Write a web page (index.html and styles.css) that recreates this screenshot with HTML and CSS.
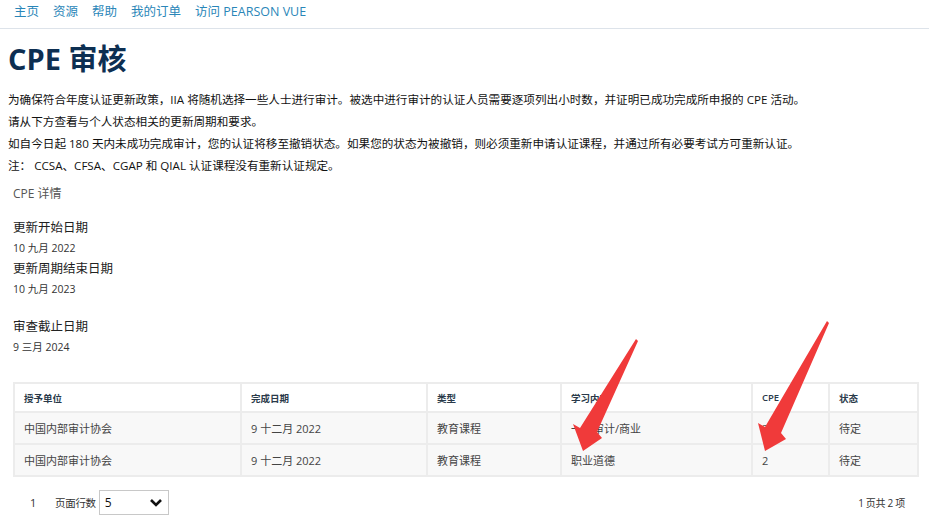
FILE: index.html
```html
<!DOCTYPE html>
<html lang="zh-CN">
<head>
    <meta charset="UTF-8">
    <title>CPE 审核</title>
    <link rel="stylesheet" href="styles.css">
</head>
<body>
<div class="page">

    <nav class="topnav">
        <a href="#">主页</a>
        <a href="#">资源</a>
        <a href="#">帮助</a>
        <a href="#">我的订单</a>
        <a href="#">访问 PEARSON VUE</a>
    </nav>

    <h1 class="title">CPE 审核</h1>

    <div class="intro">
        <p>为确保符合年度认证更新政策，IIA 将随机选择一些人士进行审计。被选中进行审计的认证人员需要逐项列出小时数，并证明已成功完成所申报的 CPE 活动。</p>
        <p>请从下方查看与个人状态相关的更新周期和要求。</p>
        <p>如自今日起 180 天内未成功完成审计，您的认证将移至撤销状态。如果您的状态为被撤销，则必须重新申请认证课程，并通过所有必要考试方可重新认证。</p>
        <p>注：&nbsp;CCSA、CFSA、CGAP 和 QIAL 认证课程没有重新认证规定。</p>
    </div>

    <div class="details">
        <div class="details-title">CPE 详情</div>

        <div class="field first">
            <div class="label">更新开始日期</div>
            <div class="value">10 九月 2022</div>
        </div>
        <div class="field">
            <div class="label">更新周期结束日期</div>
            <div class="value">10 九月 2023</div>
        </div>
        <div class="field gap">
            <div class="label">审查截止日期</div>
            <div class="value">9 三月 2024</div>
        </div>
    </div>

    <table class="cpe-table">
        <thead>
            <tr>
                <th class="c1">授予单位</th>
                <th class="c2">完成日期</th>
                <th class="c3">类型</th>
                <th class="c4">学习内容</th>
                <th class="c5">CPE</th>
                <th class="c6">状态</th>
            </tr>
        </thead>
        <tbody>
            <tr>
                <td>中国内部审计协会</td>
                <td>9 十二月 2022</td>
                <td>教育课程</td>
                <td>一般审计/商业</td>
                <td>39</td>
                <td>待定</td>
            </tr>
            <tr>
                <td>中国内部审计协会</td>
                <td>9 十二月 2022</td>
                <td>教育课程</td>
                <td>职业道德</td>
                <td>2</td>
                <td>待定</td>
            </tr>
        </tbody>
    </table>

    <div class="pager">
        <div class="pager-left">
            <span class="page-num">1</span>
            <span class="rows-label">页面行数</span>
            <div class="rows-select">
                <span>5</span>
                <svg width="14" height="10" viewBox="0 0 14 10"><path d="M2 2 L7 7 L12 2" fill="none" stroke="#111" stroke-width="2.6"/></svg>
            </div>
        </div>
        <div class="pager-right">1 页共 2 项</div>
    </div>

    <!-- annotation arrows -->
    <svg class="arrows" width="929" height="525" viewBox="0 0 929 525">
        <path d="M636 339 L638 341 L597 432 L602 438 L583 451 L573 424 L580 428 Z" fill="#f03a3a"/>
        <path d="M827 321 L829 323 L781 433 L786 439 L765 451 L758 423 L765 427 Z" fill="#f03a3a"/>
    </svg>

</div>
</body>
</html>
```

FILE: styles.css
```css
body {
    margin: 0;
    padding: 0;
    background: #fff;
    font-family: "Open Sans", "Noto Sans CJK SC", sans-serif;
    color: #222;
}

.page {
    position: relative;
    width: 929px;
    height: 525px;
    overflow: hidden;
}

.topnav {
    display: flex;
    gap: 14px;
    padding: 3px 0 0 14px;
    height: 25px;
    border-bottom: 1px solid #dde3ea;
}

.topnav a {
    color: #2a86b8;
    text-decoration: none;
    font-size: 12.5px;
    line-height: 18px;
}

.title {
    margin: 12px 0 0 8px;
    font-size: 29px;
    line-height: 36px;
    font-weight: 700;
    color: #0d2f52;
}

.intro {
    margin: 12px 0 0 8px;
}

.intro p {
    margin: 0;
    font-size: 11.6px;
    line-height: 22px;
    color: #111;
}

.details {
    margin: 8px 0 0 13px;
}

.details-title {
    font-size: 12px;
    line-height: 18px;
    color: #555;
}

.field.first {
    margin-top: 15px;
}

.field.gap {
    margin-top: 17px;
}

.label {
    font-size: 12.5px;
    line-height: 20px;
    color: #222;
}

.value {
    font-size: 10.5px;
    line-height: 21px;
    color: #333;
}

.cpe-table {
    margin: 24px 0 0 13px;
    width: 906px;
    border-collapse: collapse;
    border: 2px solid #ececec;
    font-size: 11px;
}

.cpe-table th,
.cpe-table td {
    border: 2px solid #ececec;
    text-align: left;
    padding: 0 9px;
}

.cpe-table th {
    height: 27px;
    font-size: 9.5px;
    font-weight: 600;
    color: #2a3a4a;
    background: #fff;
}

.cpe-table td {
    height: 30px;
    color: #444;
    background: #f8f8f8;
}

.c1 { width: 207px; }
.c2 { width: 166px; }
.c3 { width: 114px; }
.c4 { width: 171px; }
.c5 { width: 57px; }

.pager {
    display: flex;
    justify-content: space-between;
    align-items: center;
    margin: 13px 0 0 0;
    padding: 0 24px 0 30px;
}

.pager-left {
    display: flex;
    align-items: center;
}

.page-num {
    font-size: 11px;
    color: #333;
    width: 25px;
}

.rows-label {
    font-size: 10.5px;
    color: #333;
    margin-right: 3px;
    letter-spacing: -0.3px;
}

.rows-select {
    display: flex;
    align-items: center;
    justify-content: space-between;
    width: 58px;
    height: 23px;
    padding: 0 5px;
    border: 1px solid #c8c8c8;
    font-size: 12px;
    color: #111;
}

.pager-right {
    font-size: 10px;
    color: #333;
    letter-spacing: -0.3px;
}

.arrows {
    position: absolute;
    left: 0;
    top: 0;
}
```
